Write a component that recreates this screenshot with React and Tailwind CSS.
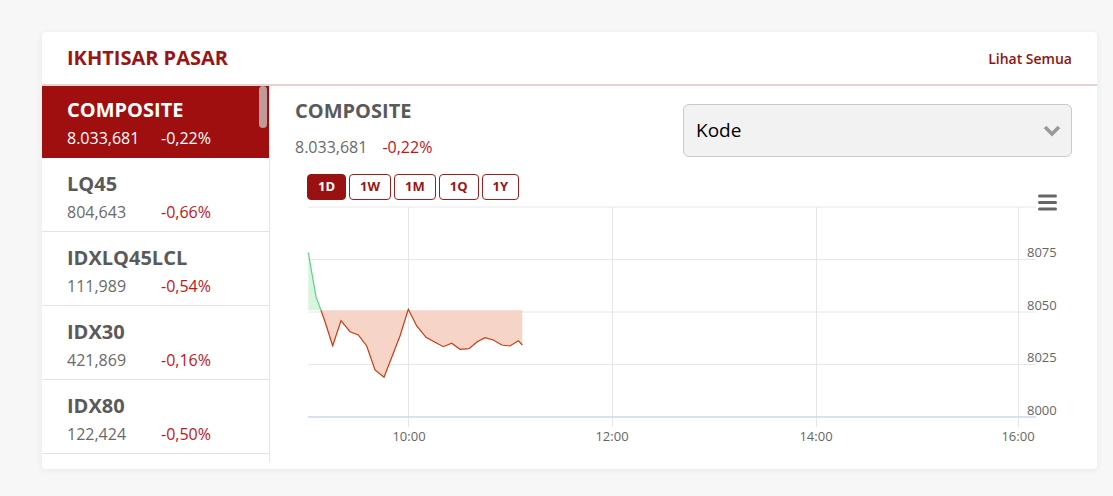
import React from "react";

const indices = [
  { name: "COMPOSITE", value: "8.033,681", change: "-0,22%" },
  { name: "LQ45", value: "804,643", change: "-0,66%" },
  { name: "IDXLQ45LCL", value: "111,989", change: "-0,54%" },
  { name: "IDX30", value: "421,869", change: "-0,16%" },
  { name: "IDX80", value: "122,424", change: "-0,50%" },
];

const ranges = ["1D", "1W", "1M", "1Q", "1Y"];

// page coordinates of the intraday line (the svg viewBox uses page pixels)
const linePts = [
  [308.3, 252.7], [316, 296.7], [321, 310.3], [325, 321.7], [332.7, 345.7], [341, 320.7],
  [350, 331.7], [358.3, 335], [366.7, 346], [375, 370], [384, 377.3], [400, 336],
  [408.3, 309.3], [416.7, 326], [426, 337.3], [435, 342.3], [443.3, 346.7], [451.7, 343.3],
  [460, 349.3], [469, 348.7], [477.3, 341.7], [485, 337.7], [493.3, 340], [501.7, 345],
  [510, 346], [518.3, 340.7], [522.3, 345],
];
const base = 310.3;
const pts = (a) => a.map((p) => p.join(",")).join(" ");
const greenLine = linePts.slice(0, 3);
const redLine = linePts.slice(2);

const Chart = () => (
  <svg viewBox="270 188 827 262" width="827" height="262" className="block -mt-[12px]">
    {[207, 259.5, 312, 364.5].map((y) => (
      <line key={y} x1="308" x2="1036" y1={y} y2={y} stroke="#e6e6e6" strokeWidth="1" />
    ))}
    {[408.5, 612.5, 816.5, 1018.5].map((x) => (
      <line key={x} x1={x} x2={x} y1="207" y2="427" stroke="#e6e6e6" strokeWidth="1" />
    ))}
    <line x1="308" x2="1036" y1="417" y2="417" stroke="#ccd6eb" strokeWidth="1.5" />

    <polygon points={pts([...greenLine, [308.3, base]])} fill="#d6f5dc" />
    <polygon points={pts([...redLine, [522.3, base]])} fill="#f6d4c8" />
    <polyline points={pts(greenLine)} fill="none" stroke="#5cd18b" strokeWidth="1.2" />
    <polyline points={pts(redLine)} fill="none" stroke="#cc3a12" strokeWidth="1.2" />

    {[
      ["8075", 257],
      ["8050", 310],
      ["8025", 362],
      ["8000", 415],
    ].map(([t, y]) => (
      <text key={t} x="1027" y={y} fontSize="13" fill="#666" fontFamily="'Open Sans', sans-serif">
        {t}
      </text>
    ))}
    {[
      ["10:00", 409],
      ["12:00", 612],
      ["14:00", 816],
      ["16:00", 1018],
    ].map(([t, x]) => (
      <text key={t} x={x} y="441" fontSize="13" fill="#666" textAnchor="middle" fontFamily="'Open Sans', sans-serif">
        {t}
      </text>
    ))}

    {[196, 202.5, 209].map((y) => (
      <line key={y} x1="1039.5" x2="1055.5" y1={y} y2={y} stroke="#666" strokeWidth="3" strokeLinecap="round" />
    ))}
  </svg>
);

const App = () => {
  return (
    <div className="min-h-[496px] bg-[#f7f7f7] pt-[32px] pl-[42px] pr-[16px] font-['Open_Sans',sans-serif]">
      <div className="h-[437px] rounded-[4px] bg-white shadow-[0_1px_6px_rgba(0,0,0,0.07)] overflow-hidden">
        <div className="flex h-[54px] items-center justify-between border-b-2 border-[#ead0d0] px-[25px]">
          <h2 className="text-[20px] font-bold text-[#9a1515]">IKHTISAR PASAR</h2>
          <a href="#" className="text-[14px] font-semibold text-[#8d1414]">
            Lihat Semua
          </a>
        </div>

        <div className="flex">
          <div className="relative h-[376px] w-[228px] shrink-0 overflow-hidden border-r border-[#e5e5e5]">
            {indices.map((it, i) => (
              <div
                key={it.name}
                className={
                  i === 0
                    ? "h-[72px] bg-[#a00f0f] px-[25px] pt-[10px]"
                    : "h-[74px] border-b border-[#e3e3e3] px-[25px] pt-[12px]"
                }
              >
                <div className={i === 0 ? "text-[20px] font-bold leading-[27px] text-white" : "text-[20px] font-bold leading-[27px] text-[#5a5a5a]"}>
                  {it.name}
                </div>
                <div className="mt-[4px] flex text-[16px] leading-[22px]">
                  <span className={i === 0 ? "w-[94px] text-white" : "w-[94px] text-[#6a6a6a]"}>{it.value}</span>
                  <span className={i === 0 ? "text-white" : "text-[#c3141c]"}>{it.change}</span>
                </div>
              </div>
            ))}
            <div className="absolute right-[2px] top-0 h-[42px] w-[8px] rounded-full bg-[#c9c9c9]/75" />
          </div>

          <div className="flex min-w-0 flex-1 flex-col">
            <div className="flex items-start justify-between px-[25px]">
              <div className="pt-[11px]">
                <div className="text-[20px] font-bold leading-[27px] text-[#5a5a5a]">COMPOSITE</div>
                <div className="mt-[12px] flex gap-[15px] text-[16px] leading-[22px]">
                  <span className="text-[#6a6a6a]">8.033,681</span>
                  <span className="text-[#c3141c]">-0,22%</span>
                </div>
              </div>
              <div className="mt-[18px] flex h-[53px] w-[389px] items-center justify-between rounded-[6px] border border-[#c9c9c9] bg-[#f2f2f2] pl-[12px] pr-[10px]">
                <span className="text-[19px] text-black">Kode</span>
                <svg width="18" height="12" viewBox="0 0 18 12">
                  <polyline points="2,2 9,9 16,2" fill="none" stroke="#9a9a9a" strokeWidth="3.6" />
                </svg>
              </div>
            </div>

            <div className="mt-[16px] flex gap-[3px] pl-[37px]">
              {ranges.map((r, i) => (
                <button
                  key={r}
                  className={
                    i === 0
                      ? "h-[26px] rounded-[4px] border border-[#9a1111] bg-[#9a1111] px-[10px] text-[13px] font-bold text-white"
                      : "h-[26px] rounded-[4px] border border-[#9a2020] bg-white px-[10px] text-[13px] font-bold text-[#9a1515]"
                  }
                >
                  {r}
                </button>
              ))}
            </div>

            <Chart />
          </div>
        </div>
      </div>
    </div>
  );
};

export default App;
